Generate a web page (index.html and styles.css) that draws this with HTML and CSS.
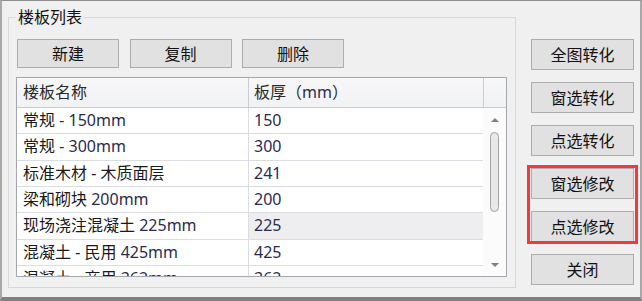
FILE: index.html
```html
<!DOCTYPE html>
<html lang="zh">
<head>
<meta charset="utf-8">
<title>楼板列表</title>
<link rel="stylesheet" href="styles.css">
</head>
<body>
<div class="window">
  <fieldset class="group">
    <legend class="group-title">楼板列表</legend>
    <div class="toolbar">
      <button class="btn btn-sm">新建</button>
      <button class="btn btn-sm">复制</button>
      <button class="btn btn-sm">删除</button>
    </div>
    <div class="grid">
      <div class="grid-head">
        <div class="hcell c1">楼板名称</div>
        <div class="hcell c2">板厚（<span class="num">mm</span>）</div>
        <div class="hcell c3"></div>
      </div>
      <div class="grid-body">
        <div class="rows">
          <div class="row"><div class="cell c1">常规 <span class="num">- 150mm</span></div><div class="cell c2"><span class="num">150</span></div></div>
          <div class="row"><div class="cell c1">常规 <span class="num">- 300mm</span></div><div class="cell c2"><span class="num">300</span></div></div>
          <div class="row"><div class="cell c1">标准木材 - 木质面层</div><div class="cell c2"><span class="num">241</span></div></div>
          <div class="row"><div class="cell c1">梁和砌块 <span class="num">200mm</span></div><div class="cell c2"><span class="num">200</span></div></div>
          <div class="row"><div class="cell c1">现场浇注混凝土 <span class="num">225mm</span></div><div class="cell c2 sel"><span class="num">225</span></div></div>
          <div class="row"><div class="cell c1">混凝土 - 民用 <span class="num">425mm</span></div><div class="cell c2"><span class="num">425</span></div></div>
          <div class="row"><div class="cell c1">混凝土 - 商用 <span class="num">362mm</span></div><div class="cell c2"><span class="num">362</span></div></div>
        </div>
        <div class="scrollbar">
          <div class="arrow-up"></div>
          <div class="thumb"></div>
          <div class="arrow-down"></div>
        </div>
      </div>
    </div>
  </fieldset>
  <div class="side">
    <button class="btn btn-lg">全图转化</button>
    <button class="btn btn-lg">窗选转化</button>
    <button class="btn btn-lg">点选转化</button>
    <div class="highlight">
      <button class="btn btn-lg">窗选修改</button>
      <button class="btn btn-lg">点选修改</button>
    </div>
    <button class="btn btn-lg">关闭</button>
  </div>
</div>
</body>
</html>
```

FILE: styles.css
```css
html, body {
  margin: 0;
  padding: 0;
  background: #f0f0f0;
}

body {
  font-family: "Noto Sans", "Noto Sans CJK SC", sans-serif;
  font-size: 16px;
  color: #1a1a1a;
}

.window {
  box-sizing: border-box;
  width: 642px;
  height: 301px;
  background: #f0f0f0;
  border-top: 1px solid #8e8e8e;
  border-left: 2px solid #a8a8a8;
  border-right: 2px solid #a8a8a8;
  border-bottom: 4px solid #808080;
  display: flex;
  align-items: flex-start;
  overflow: hidden;
}

.group {
  box-sizing: border-box;
  width: 508px;
  margin: 6px 0 0 6px;
  padding: 12px 8px 10px 7px;
  border: 1px solid #d8d8d8;
  min-width: 0;
}

.group-title {
  padding: 0 2px;
  font-size: 16px;
  line-height: 20px;
  color: #111;
}

.toolbar {
  display: flex;
  gap: 10.5px;
  padding-left: 1px;
}

.btn {
  box-sizing: border-box;
  font-family: "Noto Sans", "Noto Sans CJK SC", sans-serif;
  font-size: 16px;
  color: #111;
  background: #e1e1e1;
  border: 1px solid #adadad;
  border-radius: 0;
  padding: 0;
  margin: 0;
  line-height: 20px;
}

.btn-sm {
  width: 102px;
  height: 29px;
}

.btn-lg {
  width: 103px;
  height: 31px;
}

.grid {
  box-sizing: border-box;
  width: 491px;
  height: 200px;
  margin-top: 9px;
  border: 1px solid #a4a8b0;
  background: #ffffff;
  overflow: hidden;
}

.grid-head {
  display: flex;
  height: 30px;
  box-sizing: border-box;
  border-bottom: 1px solid #c9ccd3;
  background: linear-gradient(#f7f7f8, #f1f2f4);
}

.hcell {
  box-sizing: border-box;
  height: 29px;
  line-height: 29px;
  color: #2a2a2a;
}

.hcell.c1,
.hcell.c2 {
  border-right: 1px solid #c9ccd3;
}

.c1 {
  width: 232px;
  padding-left: 6px;
}

.c2 {
  width: 235px;
  padding-left: 5px;
}

.hcell.c3 {
  width: 22px;
}

.grid-body {
  display: flex;
  height: 169px;
}

.rows {
  width: 466px;
  flex: none;
}

.row {
  display: flex;
  box-sizing: border-box;
  height: 26.33px;
  border-bottom: 1px solid #dcdde2;
}

.cell {
  box-sizing: border-box;
  line-height: 25px;
  white-space: nowrap;
  overflow: hidden;
}

.cell.c1 {
  border-right: 1px solid #dcdde2;
}

.cell.c2 {
  width: 234px;
}

.cell.sel {
  background: #eeeef1;
}

.num {
  color: #2b2b50;
}

.scrollbar {
  flex: 1;
  display: flex;
  flex-direction: column;
  align-items: center;
  padding: 10px 0 10px 0;
  background: #fbfbfb;
}

.arrow-up,
.arrow-down {
  width: 0;
  height: 0;
  border-left: 4px solid transparent;
  border-right: 4px solid transparent;
}

.arrow-up {
  border-bottom: 4px solid #808080;
}

.arrow-down {
  margin-top: auto;
  border-top: 4px solid #808080;
}

.thumb {
  box-sizing: border-box;
  width: 9px;
  height: 80px;
  margin-top: 10px;
  border: 1px solid #a3a3a3;
  border-radius: 5px;
  background: #e8e8e8;
}

.side {
  display: flex;
  flex-direction: column;
  gap: 12px;
  margin-left: 15px;
  padding-top: 38px;
}

.highlight {
  position: relative;
  display: flex;
  flex-direction: column;
  gap: 12px;
}

.highlight::after {
  content: "";
  position: absolute;
  inset: -3px -4px -2px -4px;
  border: 3px solid #ef3b3b;
  pointer-events: none;
}
```
